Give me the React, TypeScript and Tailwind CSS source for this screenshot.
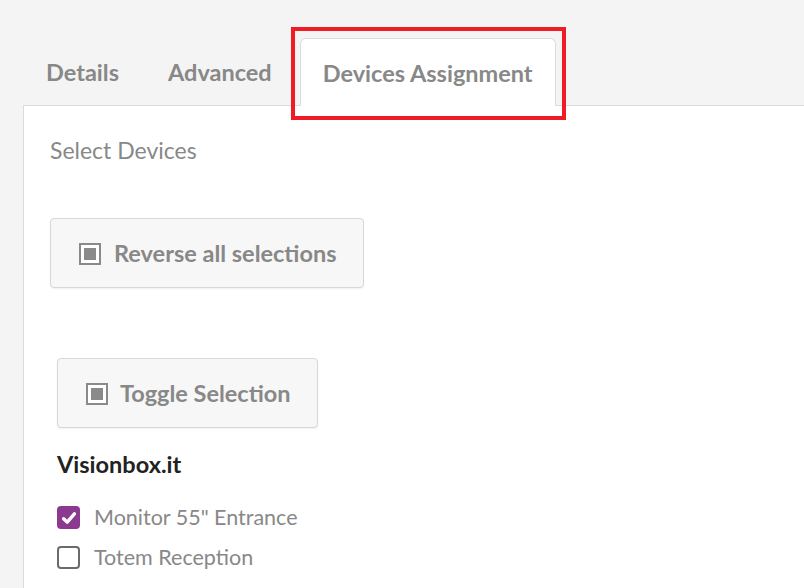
import React from 'react';

function SelIcon() {
    return (
        <span className="flex size-[22px] shrink-0 items-center justify-center border-[2px] border-[#8a8a8a] bg-white">
            <span className="size-[12px] bg-[#8a8a8a]" />
        </span>
    );
}

function Check({ checked }: { checked?: boolean }) {
    if (checked) {
        return (
            <span className="flex size-[23px] shrink-0 items-center justify-center rounded-[4px] bg-[#8b3a8f]">
                <svg viewBox="0 0 16 16" className="size-[18px]" fill="none" stroke="#fff" strokeWidth="3" strokeLinecap="round" strokeLinejoin="round">
                    <path d="M3.2 8.6l3.2 3.1L12.8 4.3" />
                </svg>
            </span>
        );
    }
    return <span className="block size-[23px] shrink-0 rounded-[4px] border-[2px] border-[#6b6b6b] bg-white" />;
}

export default function App() {
    return (
        <div className="relative w-[804px] h-[588px] overflow-hidden bg-[#f4f4f4] pt-[38px] pl-[23px] text-[#888]" style={{ fontFamily: 'Lato, "Open Sans", sans-serif' }}>
            <div className="flex items-end h-[67px] text-[23.5px] font-bold">
                <div className="pl-[23px] pr-[24px] pb-[15px]">Details</div>
                <div className="px-[25px] pb-[15px] mr-[3px]">Advanced</div>
                <div className="relative z-10 -mb-px h-[68px] flex items-center rounded-t-[6px] border border-b-0 border-[#dcdcdc] bg-white px-[22px] pt-[3px]">
                    Devices Assignment
                </div>
            </div>

            <div className="h-[500px] border-t border-l border-[#dcdcdc] bg-white pl-[26px] pt-[30px]">
                <p className="text-[23px] leading-[28px]">Select Devices</p>

                <button type="button" className="mt-[54px] flex h-[70px] w-[314px] items-center gap-[13px] rounded-[4px] border border-[#d8d8d8] bg-[#f7f7f7] pl-[28px] pt-[2px] text-[23.5px] font-bold text-[#888] shadow-[0_1px_2px_rgba(0,0,0,0.06)]">
                    <SelIcon />
                    Reverse all selections
                </button>

                <div className="ml-[7px]">
                    <button type="button" className="mt-[70px] flex h-[70px] w-[261px] items-center gap-[12px] rounded-[4px] border border-[#d8d8d8] bg-[#f7f7f7] pl-[28px] pt-[2px] text-[23.5px] font-bold text-[#888] shadow-[0_1px_2px_rgba(0,0,0,0.06)]">
                        <SelIcon />
                        Toggle Selection
                    </button>

                    <h3 className="mt-[22px] text-[23.5px] font-bold leading-[28px] text-[#222]">Visionbox.it</h3>

                    <ul className="mt-[28px] flex flex-col gap-[17px] text-[21.5px]">
                        <li className="flex items-center gap-[14px]">
                            <Check checked />
                            <span className="leading-[23px]">Monitor 55" Entrance</span>
                        </li>
                        <li className="flex items-center gap-[14px]">
                            <Check />
                            <span className="leading-[23px]">Totem Reception</span>
                        </li>
                    </ul>
                </div>
            </div>

            <div className="pointer-events-none absolute left-[291px] top-[27px] h-[93px] w-[275px] border-[4px] border-[#ee1c24]" />
        </div>
    );
}
